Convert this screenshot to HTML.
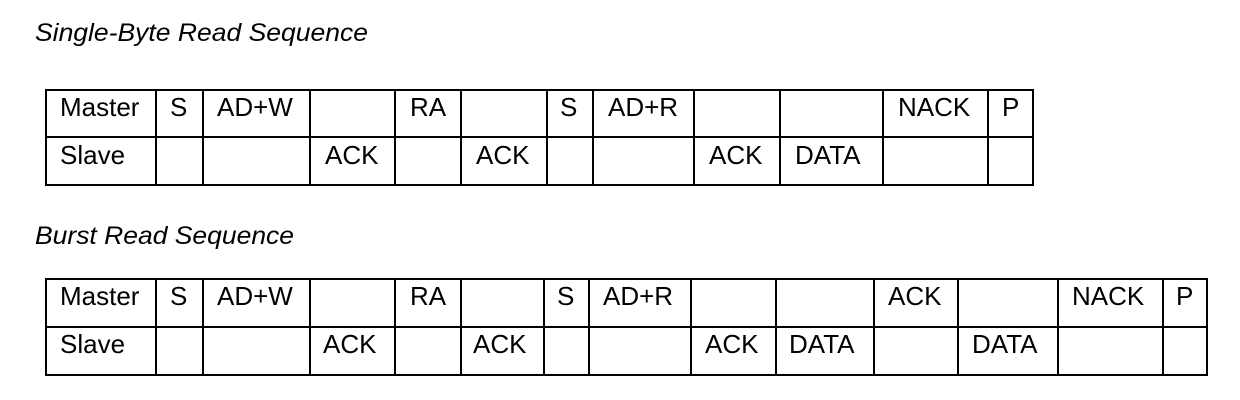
<!DOCTYPE html>
<html><head><meta charset="utf-8"><style>
html,body{margin:0;padding:0;background:#fff;width:1240px;height:400px;overflow:hidden}
svg{display:block}
text{font-family:"Liberation Sans",Arial,sans-serif;font-size:26px;fill:#000}
.t{font-style:italic;font-size:25px}
line{stroke:#000;stroke-width:2}
</style></head><body>
<svg width="1240" height="400" viewBox="0 0 1240 400">
<text class="t" x="35" y="41" textLength="333" lengthAdjust="spacingAndGlyphs">Single-Byte Read Sequence</text>
<text class="t" x="35" y="244" textLength="259" lengthAdjust="spacingAndGlyphs">Burst Read Sequence</text>
<g>
<line x1="45" y1="90" x2="1034" y2="90"/>
<line x1="45" y1="137" x2="1034" y2="137"/>
<line x1="45" y1="185" x2="1034" y2="185"/>
<line x1="46" y1="89" x2="46" y2="186"/>
<line x1="156" y1="90" x2="156" y2="185"/>
<line x1="203" y1="90" x2="203" y2="185"/>
<line x1="310" y1="90" x2="310" y2="185"/>
<line x1="395" y1="90" x2="395" y2="185"/>
<line x1="461" y1="90" x2="461" y2="185"/>
<line x1="547" y1="90" x2="547" y2="185"/>
<line x1="593" y1="90" x2="593" y2="185"/>
<line x1="694" y1="90" x2="694" y2="185"/>
<line x1="780" y1="90" x2="780" y2="185"/>
<line x1="883" y1="90" x2="883" y2="185"/>
<line x1="988" y1="90" x2="988" y2="185"/>
<line x1="1033" y1="89" x2="1033" y2="186"/>
<text x="60" y="116">Master</text>
<text x="170" y="116">S</text>
<text x="217" y="116">AD+W</text>
<text x="410" y="116">RA</text>
<text x="560" y="116">S</text>
<text x="608" y="116">AD+R</text>
<text x="898" y="116">NACK</text>
<text x="1002" y="116">P</text>
<text x="60" y="164">Slave</text>
<text x="325" y="164">ACK</text>
<text x="476" y="164">ACK</text>
<text x="709" y="164">ACK</text>
<text x="795" y="164">DATA</text>
</g>
<g>
<line x1="45" y1="279" x2="1208" y2="279"/>
<line x1="45" y1="327" x2="1208" y2="327"/>
<line x1="45" y1="375" x2="1208" y2="375"/>
<line x1="46" y1="278" x2="46" y2="376"/>
<line x1="156" y1="279" x2="156" y2="375"/>
<line x1="203" y1="279" x2="203" y2="375"/>
<line x1="310" y1="279" x2="310" y2="375"/>
<line x1="395" y1="279" x2="395" y2="375"/>
<line x1="461" y1="279" x2="461" y2="375"/>
<line x1="544" y1="279" x2="544" y2="375"/>
<line x1="589" y1="279" x2="589" y2="375"/>
<line x1="691" y1="279" x2="691" y2="375"/>
<line x1="776" y1="279" x2="776" y2="375"/>
<line x1="874" y1="279" x2="874" y2="375"/>
<line x1="958" y1="279" x2="958" y2="375"/>
<line x1="1058" y1="279" x2="1058" y2="375"/>
<line x1="1163" y1="279" x2="1163" y2="375"/>
<line x1="1207" y1="278" x2="1207" y2="376"/>
<text x="60" y="305">Master</text>
<text x="170" y="305">S</text>
<text x="217" y="305">AD+W</text>
<text x="410" y="305">RA</text>
<text x="557" y="305">S</text>
<text x="603" y="305">AD+R</text>
<text x="888" y="305">ACK</text>
<text x="1072" y="305">NACK</text>
<text x="1176" y="305">P</text>
<text x="60" y="353">Slave</text>
<text x="323" y="353">ACK</text>
<text x="473" y="353">ACK</text>
<text x="705" y="353">ACK</text>
<text x="789" y="353">DATA</text>
<text x="972" y="353">DATA</text>
</g>
</svg>
</body></html>
